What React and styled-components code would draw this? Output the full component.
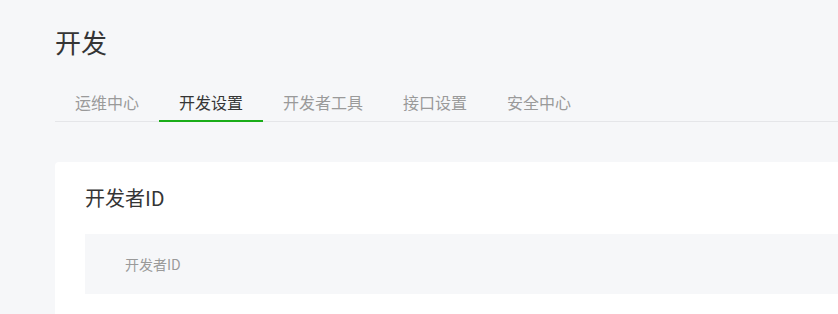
import styled, { createGlobalStyle } from 'styled-components';

const GlobalStyle = createGlobalStyle`
  html, body {
    margin: 0;
    padding: 0;
    background: #f6f7f9;
  }
  body {
    font-family: "Noto Sans CJK SC", "Noto Sans", sans-serif;
    color: #353535;
  }
`;

const Page = styled.div`
  padding: 24px 0 0 55px;
`;

const Title = styled.h1`
  margin: 0;
  font-size: 26px;
  font-weight: 400;
  line-height: 36px;
  color: #353535;
`;

const TabBar = styled.div`
  display: flex;
  margin-top: 24px;
  border-bottom: 1px solid #e5e6e9;
`;

const Tab = styled.div`
  padding: 0 20px;
  height: 38px;
  line-height: 36px;
  font-size: 16px;
  color: ${p => (p.$active ? '#353535' : '#9a9a9a')};
  border-bottom: 2px solid ${p => (p.$active ? '#1aad19' : 'transparent')};
  margin-bottom: -1px;
  box-sizing: border-box;
  cursor: pointer;
`;

const Card = styled.section`
  margin-top: 40px;
  background: #fff;
  border-radius: 4px 0 0 0;
  padding: 22px 0 30px 30px;
`;

const CardTitle = styled.h2`
  margin: 0;
  font-size: 20px;
  font-weight: 400;
  line-height: 28px;
  color: #353535;
`;

const Field = styled.div`
  margin-top: 22px;
  height: 60px;
  background: #f6f7f9;
  display: flex;
  align-items: center;
  padding-left: 40px;
`;

const FieldLabel = styled.span`
  font-size: 14px;
  color: #9a9a9a;
`;

const tabs = ['运维中心', '开发设置', '开发者工具', '接口设置', '安全中心'];

export default function App() {
  return (
    <>
      <GlobalStyle />
      <Page>
        <Title>开发</Title>
        <TabBar>
          {tabs.map((t, i) => (
            <Tab key={t} $active={i === 1}>{t}</Tab>
          ))}
        </TabBar>
        <Card>
          <CardTitle>开发者ID</CardTitle>
          <Field>
            <FieldLabel>开发者ID</FieldLabel>
          </Field>
        </Card>
      </Page>
    </>
  );
}
